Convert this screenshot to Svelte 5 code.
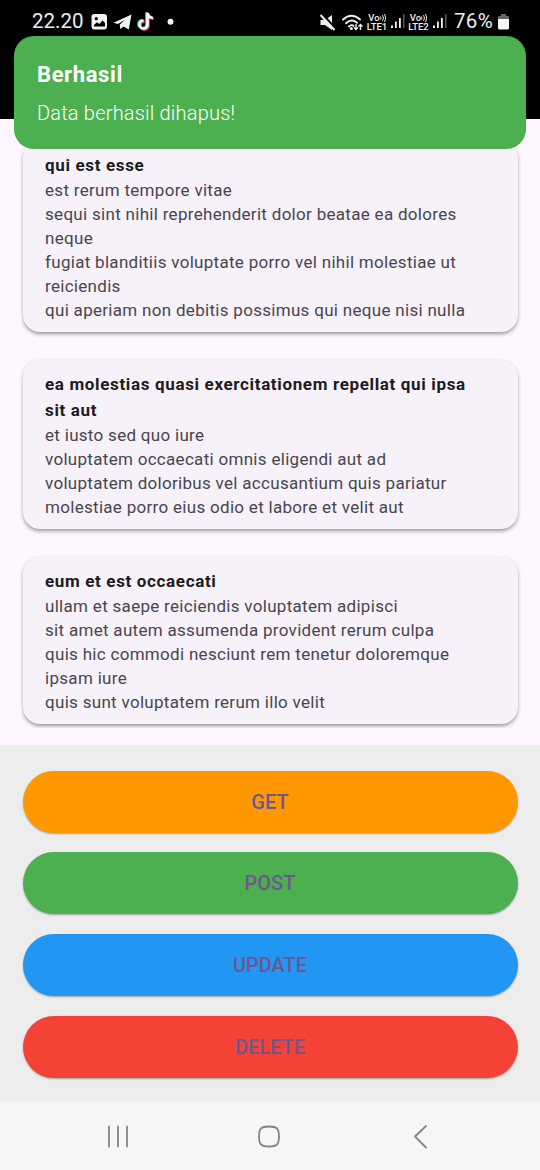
<script>
  const posts = [
    { title: ['qui est esse'], body: ['est rerum tempore vitae', 'sequi sint nihil reprehenderit dolor beatae ea dolores', 'neque', 'fugiat blanditiis voluptate porro vel nihil molestiae ut', 'reiciendis', 'qui aperiam non debitis possimus qui neque nisi nulla'] },
    { title: ['ea molestias quasi exercitationem repellat qui ipsa', 'sit aut'], body: ['et iusto sed quo iure', 'voluptatem occaecati omnis eligendi aut ad', 'voluptatem doloribus vel accusantium quis pariatur', 'molestiae porro eius odio et labore et velit aut'] },
    { title: ['eum et est occaecati'], body: ['ullam et saepe reiciendis voluptatem adipisci', 'sit amet autem assumenda provident rerum culpa', 'quis hic commodi nesciunt rem tenetur doloremque', 'ipsam iure', 'quis sunt voluptatem rerum illo velit'] }
  ];
  const actions = ['GET', 'POST', 'UPDATE', 'DELETE'];
</script>

{#snippet volte(label)}
  <div class="volte">
    <span>Vo<svg width="6" height="9" viewBox="0 0 6 9"><path d="M.5 3.500q1 1.500 0 3M2.500 2.200q2 2.800 0 5.600M4.500 1q2.500 4 0 8" fill="none" stroke="#eee" /></svg></span>
    <span>{label}</span>
  </div>
  <svg class="bars" width="14" height="16" viewBox="0 0 14 16" fill="#eee"><path d="M0 12.500h2V15H0zM4 8.500h1.800V15H4zM8 5h1.800v10H8z" /><path d="M12 1h1.500v14H12z" fill="#555" /></svg>
{/snippet}

<div class="screen">
  <header>
    <div class="status">
      <span class="clock">22.20</span>
      <svg class="notices" width="92" height="22" viewBox="0 0 92 22">
        <rect x="0.500" y="4" width="15.500" height="15.500" rx="3" fill="#f2f2f2" />
        <circle cx="5.300" cy="8.700" r="1.600" />
        <path d="M3 16.500V15l3-2.700 2.300 1.800 3.300-3.500 2.400 2.400v3.500z" />
        <path d="M22.500 12.800 40.500 4.600 37.800 19.500 32.500 16.500l-3.200 2.500-.6-4.300 5.300-5-7.100 4.400z" fill="#f2f2f2" />
        <g fill="none" stroke-width="2.600">
          <path d="M56.500 2.700v11.800a4 4 0 1 1-4-4M56.500 3c.4 3 2.300 4.700 5.300 4.900" stroke="#24e5df" transform="translate(-1 -.5)" />
          <path d="M56.500 2.700v11.800a4 4 0 1 1-4-4M56.500 3c.4 3 2.300 4.700 5.300 4.900" stroke="#f13b62" transform="translate(1 .9)" />
          <path d="M56.500 2.700v11.800a4 4 0 1 1-4-4M56.500 3c.4 3 2.300 4.700 5.300 4.900" stroke="#fff" />
        </g>
        <circle cx="79.500" cy="11.700" r="3" fill="#f2f2f2" />
      </svg>
      <div class="signals">
        <svg width="48" height="20" viewBox="0 0 48 20" fill="none" stroke="#eee">
          <g transform="translate(1 0)">
            <path d="M.5 7H5l7-5v15l-7-5H.5z" fill="#eee" stroke="none" />
            <path d="M1.500 0 15.500 15.500" stroke="#000" stroke-width="2.200" />
            <path d="M.5 2 14.500 17" stroke-width="2" />
          </g>
          <g stroke-width="1.900" stroke-linecap="round"><path d="M24 6.500q8.500-7.500 17 0M27 10.200q6-5.200 11-.4M30 13.500q3-2.500 4.500-.5" /></g>
          <circle cx="32.300" cy="15.600" r="1.500" fill="#eee" stroke="none" />
          <path d="M37 11v5.500M35 14.500l2 2 2-2M41.500 17v-5.500M39.500 13.500l2-2 2 2" stroke-width="1.400" />
        </svg>
        {@render volte('LTE1')}
        {@render volte('LTE2')}
        <span class="percent">76%</span>
        <svg class="battery" width="11" height="16" viewBox="0 0 11 16"><path d="M3 0h5v2h2q1 0 1 1v3H0V3q0-1 1-1h2z" fill="#666" /><path d="M0 5h11v9q0 1.500-1.500 1.500h-8Q0 15.500 0 14z" fill="#f4f4f4" /></svg>
      </div>
    </div>
  </header>

  <main>
    {#each posts as post}
      <article>
        <h2>{#each post.title as line}<span>{line}</span>{/each}</h2>
        <p>{#each post.body as line}<span>{line}</span>{/each}</p>
      </article>
    {/each}
  </main>

  <section class="actions">
    {#each actions as action}
      <button class={action.toLowerCase()}>{action}</button>
    {/each}
  </section>

  <nav>
    <svg width="22" height="24" viewBox="0 0 22 24"><path d="M2 1.500v20M11 1.500v20M20 1.500v20" /></svg>
    <svg width="24" height="24" viewBox="0 0 24 24"><path d="M12 1.500c8 0 10 2 10 10s-2 10-10 10-10-2-10-10 2-10 10-10z" /></svg>
    <svg width="16" height="24" viewBox="0 0 16 24"><path d="M14 1 3 11.500l11 11" /></svg>
  </nav>

  <div class="toast" role="status">
    <strong>Berhasil</strong>
    <span>Data berhasil dihapus!</span>
  </div>
</div>

<style>
  :global(body) { margin: 0; }
  .screen { position: relative; display: flex; flex-direction: column; width: 540px; height: 1170px; overflow: hidden; background: #fef7ff; font-family: Roboto, sans-serif; }
  header { height: 119px; flex: none; background: #000; }
  .status { display: flex; align-items: flex-start; height: 36px; padding: 10px 31px 0 32px; box-sizing: border-box; color: #eee; }
  .clock { width: 59px; font: 20.500px/23px Roboto, sans-serif; }
  .signals { display: flex; margin-left: auto; align-items: flex-start; }
  .signals > svg:first-child { margin-top: 3px; }
  .volte { display: flex; flex-direction: column; width: 20px; margin: 3px 4px 0 0; font: 500 9.500px/9px Roboto, sans-serif; align-items: center; }
  .volte span { display: flex; height: 9px; white-space: nowrap; }
  .bars { margin: 3px 3.500px 0 0; }
  .percent { width: 43px; margin-left: 4px; font: 20.500px/23px Roboto, sans-serif; letter-spacing: .3px; }
  .battery { margin: 4px 0 0 1px; }
  main { height: 609px; padding: 22px 22.500px 0; flex: none; box-sizing: border-box; display: flex; flex-direction: column; gap: 28px; overflow: hidden; }
  article { flex: none; padding: 11.900px 22.500px 9.600px; border-radius: 17px; background: #f7f1f9; box-shadow: 0 3px 4px -1px #0005, 0 1px 4px #0002; }
  h2, p { margin: 0; font-size: 17px; color: #1d1b20; }
  h2 { line-height: 25.600px; font-weight: 700; letter-spacing: .65px; }
  p { padding-top: .6px; line-height: 23.900px; letter-spacing: .3px; color: #49454f; }
  h2 span, p span { display: block; white-space: nowrap; }
  .actions { margin-top: 17px; height: 357px; flex: none; box-sizing: border-box; padding: 25.500px 22.500px 0; display: flex; flex-direction: column; gap: 19.700px; background: #ededed; }
  button { height: 62px; flex: none; padding: 0; border: 0; border-radius: 31px; color: #6c5890; font: 500 20px Roboto, sans-serif; letter-spacing: 0; box-shadow: 0 1px 2px #0005; }
  .get { background: #ff9800; }
  .post { background: #4caf50; }
  .update { background: #2196f3; }
  .delete { background: #f44336; }
  nav { flex: 1; display: flex; justify-content: space-between; padding: 23px 112px 0 107px; background: #f6f6f8; }
  nav svg { fill: none; stroke: #858587; stroke-width: 1.800; stroke-linecap: round; stroke-linejoin: round; }
  nav svg:nth-child(2) { margin-left: -4px; }
  .toast { position: absolute; left: 14px; top: 36px; width: 512px; height: 113px; box-sizing: border-box; padding: 25px 23px; border-radius: 20px; background: #4caf50; color: #fff; display: flex; flex-direction: column; gap: 12px; }
  .toast strong { font-size: 22px; line-height: 27px; letter-spacing: .6px; }
  .toast span { font-size: 20px; line-height: 27px; font-weight: 300; letter-spacing: .2px; }
</style>
